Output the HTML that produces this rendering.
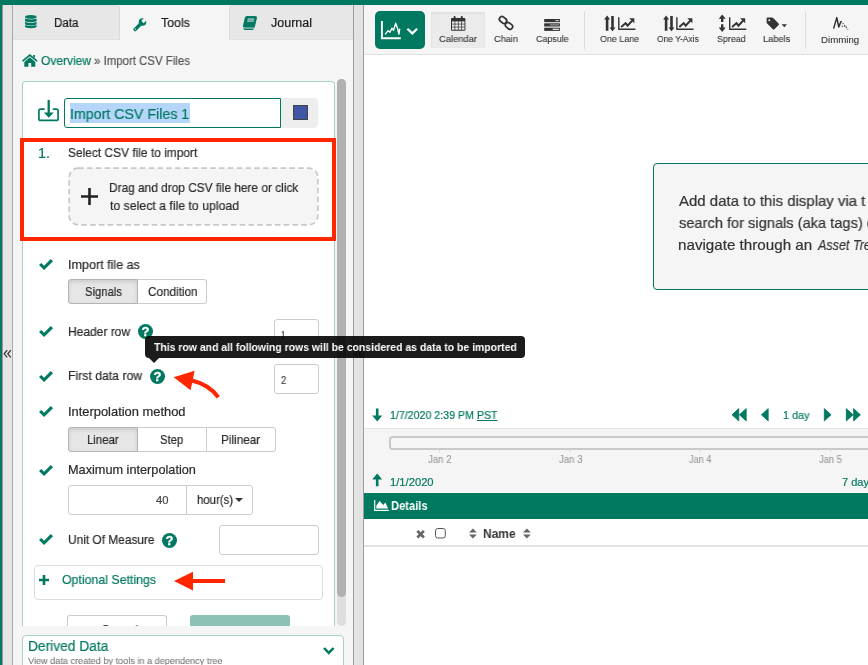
<!DOCTYPE html>
<html lang="en">
<head>
<meta charset="utf-8">
<title>Import CSV Files</title>
<style>
*{box-sizing:border-box;margin:0;padding:0}
html,body{width:868px;height:665px;overflow:hidden;background:#fff}
body{font-family:"Liberation Sans",sans-serif;font-size:13px;color:#333;position:relative}
.abs{position:absolute}
.t{position:absolute;white-space:nowrap;line-height:1;transform-origin:0 50%;will-change:transform;-webkit-text-stroke:0.2px}
.g{color:#007960}
#topbar{left:0;top:0;width:868px;height:5px;background:#007960}
#leftgreen{left:0;top:0;width:2px;height:665px;background:#007960}
#collapse{left:2px;top:5px;width:11px;height:660px;background:#e5e5e5;border-left:1px solid #999;border-right:1px solid #aaa}
#panel{left:13px;top:5px;width:340px;height:660px;background:#f5f5f5}
#divider{left:353px;top:5px;width:11px;height:660px;background:#e3e3e3;border-left:1px solid #9c9c9c;border-right:1px solid #9c9c9c}
.tab{position:absolute;top:5px;height:35px;background:#e7e7e7;border:1px solid #dadada;border-top-color:#e2e2e2;border-bottom-color:#e0e0e0}
#card{left:22px;top:81px;width:313px;height:545px;background:#fff;border:1px solid #a6d3c8;border-bottom:none;border-radius:4px 4px 0 0}
#scroll{left:337px;top:79px;width:9px;height:518px;background:#b1b1b1;border-radius:5px}
#redbox{left:20px;top:138px;width:316px;height:103px;border:4px solid #ff2600}
#drop{left:68px;top:167px;width:251px;height:59px}
.btn{position:absolute;height:25px;border:1px solid #ccc;background:#fff}
.btn.act{background:#e6e6e6;border-color:#b4b4b4;box-shadow:inset 0 2px 4px rgba(0,0,0,.12)}
.inp{position:absolute;border:1px solid #ccc;border-radius:3px;background:#fff}
#tooltip{left:145px;top:335.5px;width:379.5px;height:22px;background:rgba(8,8,8,.92);border-radius:4px}
#tiparrow{left:148.5px;top:357.5px;width:0;height:0;border:5.5px solid transparent;border-top:5px solid rgba(8,8,8,.92);border-bottom:none}
#optional{left:34px;top:565px;width:289px;height:35px;border:1px solid #ddd;border-radius:4px;background:#fff}
#derived{left:22px;top:635px;width:322px;height:40px;border:1px solid #a6d3c8;border-radius:4px;background:#fff}
#toolbar{left:364px;top:5px;width:504px;height:50px;background:#f5f5f5;border-bottom:1px solid #e0e0e0}
#viewbtn{left:375px;top:11px;width:50px;height:38px;background:#007960;border-radius:5px}
#calsel{left:431px;top:12px;width:54px;height:36px;background:#ebebeb;box-shadow:inset 0 1px 3px rgba(0,0,0,.08)}
.sep{position:absolute;top:11px;width:1px;height:38px;background:#dcdcdc}
#info{left:653px;top:162.5px;width:230px;height:127.5px;border:1px solid #007960;border-radius:4px;background:#f5f5f5}
#rangebar{left:364px;top:428px;width:504px;height:65px;background:#f5f5f5;border-top:1px solid #e4e4e4}
#slider{left:389px;top:436px;width:490px;height:14px;border:2px solid #c9c9c9;border-radius:3.5px;background:#f6f6f6}
#details{left:364px;top:493px;width:504px;height:26px;background:#007960}
#thead{left:364px;top:519px;width:504px;height:28px;background:#fff;border-bottom:2px solid #e3e3e3}
svg{position:absolute;overflow:visible;will-change:transform}
</style>
</head>
<body>
<div class="abs" id="panel"></div>
<div class="abs" id="topbar"></div>
<div class="abs" id="leftgreen"></div>
<div class="abs" id="collapse"></div>

<!-- tabs -->
<div class="tab" style="left:13px;width:107px;border-radius:3px 3px 0 0;border-left:none"></div>
<div class="tab" style="left:229px;width:124px;border-radius:3px 3px 0 0;border-right:none"></div>

<!-- breadcrumb -->

<!-- card -->
<div class="abs" id="card"></div>
<div class="abs" style="left:337px;top:79px;width:9px;height:547px;background:#dedede;border-radius:5px"></div>
<div class="abs" id="scroll"></div>

<!-- name row -->
<div class="inp" style="left:64px;top:98px;width:217px;height:30px;border-color:#007960;border-radius:3px 0 0 3px"></div>
<div class="abs" style="left:70px;top:103px;width:120px;height:20px;background:#b5d5fb"></div>
<div class="abs" style="left:281px;top:98px;width:37px;height:30px;background:#eee;border-radius:0 4px 4px 0"></div>
<div class="abs" style="left:293px;top:105px;width:15px;height:15px;background:#4055a5;border:1px solid #444"></div>

<!-- step 1 -->
<svg id="drop" viewBox="0 0 251 59"><rect x="1.2" y="1.2" width="248.6" height="56.6" rx="9" fill="#f5f5f5" stroke="#c8c8c8" stroke-width="1.7" stroke-dasharray="5.6 3.2"/></svg>
<div class="abs" id="redbox"></div>

<!-- import as -->
<div class="btn act" style="left:68px;top:279px;width:70px;border-radius:3px 0 0 3px"></div>
<div class="btn" style="left:137px;top:279px;width:70px;border-radius:0 3px 3px 0;border-left-color:#b4b4b4"></div>

<!-- header row -->
<div class="inp" style="left:274px;top:319px;width:45px;height:30px"></div>

<!-- first data row -->
<div class="inp" style="left:274px;top:364px;width:45px;height:30px"></div>


<!-- interpolation -->
<div class="btn act" style="left:68px;top:427px;width:70px;border-radius:3px 0 0 3px"></div>
<div class="btn" style="left:137px;top:427px;width:70px;border-left-color:#b4b4b4"></div>
<div class="btn" style="left:206px;top:427px;width:70px;border-radius:0 3px 3px 0"></div>

<!-- max interp -->
<div class="inp" style="left:68px;top:485px;width:119px;height:30px;border-radius:3px 0 0 3px"></div>
<div class="inp" style="left:186px;top:485px;width:67px;height:30px;border-radius:0 3px 3px 0"></div>
<div class="abs" style="left:235px;top:498px;width:0;height:0;border:4px solid transparent;border-top:4px solid #333;border-bottom:none"></div>

<!-- UOM -->
<div class="inp" style="left:219px;top:525px;width:100px;height:30px"></div>

<!-- optional -->
<div class="abs" id="optional"></div>

<!-- buttons -->
<div class="abs" style="left:67px;top:615px;width:100px;height:11px;border:1px solid #ccc;border-bottom:none;border-radius:3px 3px 0 0;background:#fff"></div>
<div class="abs" style="left:190px;top:615px;width:100px;height:11px;border-radius:3px 3px 0 0;background:#8cc2b6"></div>


<div class="abs" style="left:23px;top:610px;width:311px;height:16px;overflow:hidden"><div class="t" style="left:78px;top:14.2px;font-size:12.7px;color:#333;transform:scaleX(.94)">Cancel</div><div class="t" style="left:198px;top:14.5px;font-size:12.7px;color:#e8f3f0;transform:scaleX(.94)">Execute</div></div>
<div class="abs" id="derived"></div>
<!-- ICONS LEFT -->
<!-- database -->
<svg style="left:24.8px;top:14.8px" width="11.6" height="13.2" viewBox="0 0 12 13.2" preserveAspectRatio="none">
<ellipse cx="6" cy="1.9" rx="6" ry="1.9" fill="#007960"/>
<path d="M0 2.9 A6 1.7 0 0 0 12 2.9 V5.5 A6 1.7 0 0 1 0 5.5 Z M0 6.2 A6 1.7 0 0 0 12 6.2 V8.8 A6 1.7 0 0 1 0 8.8 Z M0 9.4 A6 1.7 0 0 0 12 9.4 V11.5 A6 1.7 0 0 1 0 11.5 Z" fill="#007960"/>
</svg>
<!-- wrench -->
<svg style="left:132.9px;top:17.6px" width="13.4" height="13.6" viewBox="0 0 13.4 13.6">
<path d="M2.1 11.5 L8.6 5" stroke="#007960" stroke-width="3.3" stroke-linecap="round" fill="none"/>
<circle cx="9.5" cy="4" r="3.8" fill="#007960"/>
<path d="M10.7 5.2 L14.3 1.6 L11.9 -0.8 L8.3 2.8 Z" fill="#f5f5f5"/>
<circle cx="2.4" cy="11.2" r="0.6" fill="#f5f5f5"/>
</svg>
<!-- book -->
<svg style="left:241.5px;top:16px" width="15" height="14" viewBox="0 0 15 14">
<path d="M4.2 0.5 H13.6 Q14.8 0.5 14.5 1.7 L12.3 11.2 Q12.1 12 11.2 12 H3 Q1.8 12 1.8 13 Q1.8 13.5 2.6 13.5 H11.4" fill="none" stroke="#007960" stroke-width="1"/>
<path d="M4.2 0.5 H13.6 Q14.8 0.5 14.5 1.7 L12.3 10.4 Q12.1 11.2 11.2 11.2 H2.2 Q0.6 11.4 0.9 9.9 L2.9 1.6 Q3.2 0.5 4.2 0.5 Z" fill="#007960"/>
<path d="M5.6 3.1 H12.2 M5.2 5.1 H11.8" stroke="#e8e8e8" stroke-width="1" fill="none"/>
</svg>
<!-- home -->
<svg style="left:22.4px;top:54px" width="15.6" height="12.8" viewBox="0 0 15.6 12.8">
<path d="M7.8 0 L15.6 6.5 L14.5 7.8 L7.8 2.2 L1.1 7.8 L0 6.5 Z" fill="#007960"/>
<path d="M11.2 0.9 H13 V4 L11.2 2.5 Z" fill="#007960"/>
<path d="M7.8 3.3 L13.3 7.9 V12.8 H9.2 V9 H6.4 V12.8 H2.3 V7.9 Z" fill="#007960"/>
</svg>
<!-- import -->
<svg style="left:38px;top:99.5px" width="21" height="21.5" viewBox="0 0 21 21.5">
<path d="M6.7 9.1 H2.6 Q0.9 9.1 0.9 10.8 V18.7 Q0.9 20.4 2.6 20.4 H18.4 Q20.1 20.4 20.1 18.7 V10.8 Q20.1 9.1 18.4 9.1 H14.8" fill="none" stroke="#007960" stroke-width="1.7"/>
<path d="M10.7 0.8 V13.5" stroke="#007960" stroke-width="2.3" stroke-linecap="round"/>
<path d="M5.8 12.6 H15.8 L10.8 17.8 Z" fill="#007960"/>
</svg>
<!-- plus (dropzone) -->
<svg style="left:81px;top:188px" width="17" height="17" viewBox="0 0 17 17"><path d="M8.5 0 V17 M0 8.5 H17" stroke="#222" stroke-width="2.6"/></svg>
<!-- checks -->
<svg style="left:39px;top:259px" width="14" height="11" viewBox="0 0 14 11"><path id="chk" d="M0 6.1 L2.2 3.9 L5.1 6.8 L11.8 0 L14 2.2 L5.1 11.1 Z" fill="#007960"/></svg>
<svg style="left:39px;top:326px" width="14" height="11" viewBox="0 0 14 11"><use href="#chk"/></svg>
<svg style="left:39px;top:371px" width="14" height="11" viewBox="0 0 14 11"><use href="#chk"/></svg>
<svg style="left:39px;top:406px" width="14" height="11" viewBox="0 0 14 11"><use href="#chk"/></svg>
<svg style="left:39px;top:465px" width="14" height="11" viewBox="0 0 14 11"><use href="#chk"/></svg>
<svg style="left:39px;top:534px" width="14" height="11" viewBox="0 0 14 11"><use href="#chk"/></svg>
<!-- question marks -->
<svg style="left:138.2px;top:323.5px" width="15" height="15" viewBox="0 0 15 15"><circle cx="7.5" cy="7.5" r="7.5" fill="#007960"/><text x="7.5" y="12.1" text-anchor="middle" font-family="Liberation Sans, sans-serif" font-weight="bold" font-size="13" fill="#fff" stroke="#fff" stroke-width="0.3">?</text></svg>
<svg style="left:150.1px;top:368.9px" width="15" height="15" viewBox="0 0 15 15"><circle cx="7.5" cy="7.5" r="7.5" fill="#007960"/><text x="7.5" y="12.1" text-anchor="middle" font-family="Liberation Sans, sans-serif" font-weight="bold" font-size="13" fill="#fff" stroke="#fff" stroke-width="0.3">?</text></svg>
<svg style="left:162.3px;top:532.5px" width="15" height="15" viewBox="0 0 15 15"><circle cx="7.5" cy="7.5" r="7.5" fill="#007960"/><text x="7.5" y="12.1" text-anchor="middle" font-family="Liberation Sans, sans-serif" font-weight="bold" font-size="13" fill="#fff" stroke="#fff" stroke-width="0.3">?</text></svg>
<!-- optional plus -->
<svg style="left:39.2px;top:574.5px" width="10" height="10" viewBox="0 0 10 10"><path d="M5 0 V10 M0 5 H10" stroke="#007960" stroke-width="2.6"/></svg>
<!-- derived chevron -->
<svg style="left:322.8px;top:647.4px" width="11.6" height="7.8" viewBox="0 0 11.6 7.8"><path d="M1 1 L5.8 5.9 L10.6 1" stroke="#007960" stroke-width="2.5" fill="none"/></svg>
<!-- red arrows -->
<svg style="left:0;top:0" width="868" height="665" viewBox="0 0 868 665">
<path d="M173.7 377.2 L194.6 370.8 L190.6 390.2 Z" fill="#ff2600"/>
<path d="M191 380.3 Q209 384.5 218.3 397.2" stroke="#ff2600" stroke-width="4" fill="none"/>
<path d="M174 581 L193 571.7 V590.5 Z" fill="#ff2600"/>
<path d="M192 581 H225" stroke="#ff2600" stroke-width="4.2"/>
</svg>

<div class="abs" id="divider"></div>

<svg style="left:0;top:0" width="868" height="665" viewBox="0 0 868 665"><path d="M7.2 350.2 L4.2 353.8 L7.2 357.4 M10.8 350.2 L7.8 353.8 L10.8 357.4 M358.2 350.2 L355.2 353.8 L358.2 357.4 M361.8 350.2 L358.8 353.8 L361.8 357.4" stroke="#333" stroke-width="1.25" fill="none"/></svg>
<!-- toolbar -->
<div class="abs" id="toolbar"></div>
<div class="abs" id="viewbtn"></div>
<div class="abs" id="calsel"></div>
<div class="sep" style="left:584px"></div>
<div class="sep" style="left:805px"></div>

<!-- info -->
<div class="abs" id="info"></div>

<!-- date row -->
<div class="abs" id="rangebar"></div>
<div class="abs" id="slider"></div>

<div class="abs" id="details"></div>
<div class="abs" id="thead"></div>

<!-- ICONS RIGHT -->
<svg style="left:0;top:0" width="868" height="665" viewBox="0 0 868 665">
<!-- view button trend icon -->
<path d="M381.9 21 V38.3 H400.8" stroke="#fff" stroke-width="1.9" fill="none"/>
<path d="M385.2 34.4 L388 30.6 L390 32.2 L391.9 28.3 L393.5 30.2 L395.7 23.2 L397.7 29 L398.9 34.2 L399.8 28.6" stroke="#fff" stroke-width="1.35" fill="none" stroke-linejoin="round"/>
<path d="M407.4 28.8 L412.3 33.4 L417.2 28.8" stroke="#fff" stroke-width="2.2" fill="none"/>
<!-- calendar -->
<g fill="#333">
<rect x="451" y="18" width="14.4" height="12.8" rx="1"/>
<rect x="453.6" y="16" width="2" height="4" rx="1"/>
<rect x="460.8" y="16" width="2" height="4" rx="1"/>
</g>
<g fill="#eaeaea">
<rect x="452" y="21.4" width="2.6" height="2.3"/><rect x="455.3" y="21.4" width="2.6" height="2.3"/><rect x="458.6" y="21.4" width="2.6" height="2.3"/><rect x="461.9" y="21.4" width="2.6" height="2.3"/>
<rect x="452" y="24.4" width="2.6" height="2.3"/><rect x="455.3" y="24.4" width="2.6" height="2.3"/><rect x="458.6" y="24.4" width="2.6" height="2.3"/><rect x="461.9" y="24.4" width="2.6" height="2.3"/>
<rect x="452" y="27.4" width="2.6" height="2.3"/><rect x="455.3" y="27.4" width="2.6" height="2.3"/><rect x="458.6" y="27.4" width="2.6" height="2.3"/><rect x="461.9" y="27.4" width="2.6" height="2.3"/>
</g>
<!-- chain -->
<g fill="none" stroke="#333" stroke-width="1.7">
<rect x="-3.9" y="-2.6" width="7.8" height="5.2" rx="2.6" transform="translate(503 20) rotate(38)"/>
<rect x="-3.9" y="-2.6" width="7.8" height="5.2" rx="2.6" transform="translate(509 25.9) rotate(38)"/>
</g>
<!-- capsule -->
<g>
<rect x="544.2" y="19" width="15.7" height="3.2" fill="#333"/><rect x="555.3" y="20" width="3.6" height="1.2" fill="#bbb"/>
<rect x="544.2" y="23.3" width="15.7" height="3.2" fill="#333"/><rect x="549.8" y="24.3" width="9.1" height="1.2" fill="#999"/>
<rect x="544.2" y="27.7" width="15.7" height="3.2" fill="#333"/><rect x="552.6" y="28.7" width="6.3" height="1.2" fill="#eee"/>
</g>
<!-- one lane -->
<g id="updown" fill="#333">
<path d="M607.1 15.6 L610.1 19.5 H608.4 V30.7 H605.8 V19.5 H604.1 Z"/>
<path d="M612.5 31.3 L609.5 27.4 H611.2 V16 H613.8 V27.4 H615.5 Z"/>
</g>
<g id="chart" fill="none" stroke="#333">
<path d="M618.8 17.2 V29.3 H635.4" stroke-width="1.4"/>
<path d="M621.2 27.1 L625.6 23.1 L627.6 25.7 L632.2 20.6" stroke-width="2"/>
<path d="M629.2 18.3 H634.3 V23.2 Z" fill="#333" stroke="none"/>
</g>
<!-- one y-axis -->
<use href="#updown" x="59"/>
<use href="#chart" x="58.1"/>
<!-- spread -->
<path d="M722.2 14.4 L725.7 18.7 H723.4 V22.1 H721 V18.7 H718.7 Z M722.2 31.9 L725.7 27.6 H723.4 V24.2 H721 V27.6 H718.7 Z" fill="#333"/>
<use href="#chart" x="110.9"/>
<!-- tag -->
<path d="M766.6 18.8 Q766.6 17.6 767.8 17.6 H772 Q772.8 17.6 773.4 18.2 L778.6 23.4 Q779.4 24.2 778.6 25 L774.4 29.2 Q773.6 30 772.8 29.2 L767.2 23.6 Q766.6 23 766.6 22.2 Z" fill="#333"/>
<circle cx="769.3" cy="20.3" r="1" fill="#f5f5f5"/>
<path d="M781.6 24.2 H787 L784.3 27.2 Z" fill="#333"/>
<!-- dimming -->
<path d="M833.6 28.6 L836.8 17.6 L838.8 27 L841 21.2" stroke="#333" stroke-width="1.5" fill="none" stroke-linejoin="round"/>
<path d="M841 21.2 L848 29.6" stroke="#555" stroke-width="1.3" stroke-dasharray="1.2 1.4" fill="none"/>
<path d="M841.6 26.4 H847" stroke="#555" stroke-width="1.2" stroke-dasharray="1.2 1.4" fill="none"/>

<!-- date row arrows -->
<g fill="#007960">
<path d="M375.9 408.6 H378.5 V415.6 H382.2 L377.2 421.4 L372.2 415.6 H375.9 Z"/>
<path d="M375.9 486.2 H378.5 V479.4 H382.2 L377.2 473.6 L372.2 479.4 H375.9 Z"/>
<g stroke="#007960" stroke-width="0.8" stroke-linejoin="round"><path d="M738.8 408.6 V421 L732 414.8 Z M746.2 408.6 V421 L739.4 414.8 Z"/>
<path d="M768.2 408.6 V421 L761.4 414.8 Z"/>
<path d="M824.3 408.6 V421 L831.1 414.8 Z"/>
<path d="M846.3 408.6 V421 L853.1 414.8 Z M853.6 408.6 V421 L860.4 414.8 Z"/></g>
</g>
<!-- ticks -->
<path d="M439.5 449.5 V452.5 M570 449.5 V452.5 M700.3 449.5 V452.5 M830.5 449.5 V452.5" stroke="#d8d8d8" stroke-width="1"/>
<!-- details icon -->
<path d="M374.7 500 V510.4 H388.8" stroke="#fff" stroke-width="1.15" fill="none"/>
<path d="M376.3 508.5 V505.8 L379.5 500.9 L383.3 504.9 L385.4 502.5 L388.1 508.5 Z" fill="#fff"/>
<!-- x -->
<path d="M417.3 530.9 L423.9 537.5 M423.9 530.9 L417.3 537.5" stroke="#666" stroke-width="2.7"/>
<!-- checkbox -->
<rect x="435.5" y="528.5" width="9.8" height="9.5" rx="2.2" fill="#fff" stroke="#555" stroke-width="1"/>
<!-- sort icons -->
<g fill="#666">
<path d="M469 532.6 L472.9 528.6 L476.8 532.6 Z M469 534.4 L472.9 538.4 L476.8 534.4 Z"/>
<path d="M523 532.6 L526.9 528.6 L530.8 532.6 Z M523 534.4 L526.9 538.4 L530.8 534.4 Z"/>
</g>
</svg>
<div class="t" style="left:53.58px;top:17px;font-size:12.5px;color:#1a1a1a;transform:scaleX(0.9231);">Data</div>
<div class="t" style="left:160.50px;top:17px;font-size:12.5px;color:#1a1a1a;transform:scaleX(0.9828);">Tools</div>
<div class="t" style="left:270.75px;top:17px;font-size:12.5px;color:#1a1a1a;transform:scaleX(1.0000);">Journal</div>
<div class="t" style="left:41.00px;top:55px;font-size:12.5px;color:#007960;transform:scaleX(0.9615);">Overview</div>
<div class="t" style="left:94.00px;top:55px;font-size:12.5px;color:#555;transform:scaleX(0.9143);">» Import CSV Files</div>
<div class="t" style="left:70.03px;top:107px;font-size:14.7px;color:#007960;transform:scaleX(0.9672);">Import CSV Files 1</div>
<div class="t" style="left:37.97px;top:146px;font-size:14px;color:#007960;transform:scaleX(1.0300);">1.</div>
<div class="t" style="left:67.81px;top:147px;font-size:12.7px;color:#2a2a2a;transform:scaleX(0.9398);">Select CSV file to import</div>
<div class="t" style="left:109.06px;top:182px;font-size:12.7px;color:#2a2a2a;transform:scaleX(0.9353);">Drag and drop CSV file here or click</div>
<div class="t" style="left:110.00px;top:200px;font-size:12.7px;color:#2a2a2a;transform:scaleX(0.9680);">to select a file to upload</div>
<div class="t" style="left:67.76px;top:259px;font-size:12.7px;color:#2a2a2a;transform:scaleX(0.9894);">Import file as</div>
<div class="t" style="left:84.61px;top:286px;font-size:12.7px;color:#2a2a2a;transform:scaleX(0.8875);">Signals</div>
<div class="t" style="left:147.50px;top:286px;font-size:12.7px;color:#2a2a2a;transform:scaleX(0.9245);">Condition</div>
<div class="t" style="left:67.80px;top:326px;font-size:12.7px;color:#2a2a2a;transform:scaleX(0.9462);">Header row</div>
<div class="t" style="left:280.80px;top:330px;font-size:11px;color:#444;transform:scaleX(0.7000);">1</div>
<div class="t" style="left:67.79px;top:370px;font-size:12.7px;color:#2a2a2a;transform:scaleX(0.9638);">First data row</div>
<div class="t" style="left:280.50px;top:375px;font-size:11px;color:#444;transform:scaleX(0.8667);">2</div>
<div class="t" style="left:67.73px;top:406px;font-size:12.7px;color:#2a2a2a;transform:scaleX(1.0154);">Interpolation method</div>
<div class="t" style="left:86.60px;top:434px;font-size:12.7px;color:#2a2a2a;transform:scaleX(0.8971);">Linear</div>
<div class="t" style="left:159.86px;top:434px;font-size:12.7px;color:#2a2a2a;transform:scaleX(0.8900);">Step</div>
<div class="t" style="left:221.07px;top:434px;font-size:12.7px;color:#2a2a2a;transform:scaleX(0.9268);">Pilinear</div>
<div class="t" style="left:67.75px;top:464px;font-size:12.7px;color:#2a2a2a;transform:scaleX(1.0020);">Maximum interpolation</div>
<div class="t" style="left:155.75px;top:495px;font-size:11px;color:#444;transform:scaleX(1.0208);">40</div>
<div class="t" style="left:196.60px;top:494px;font-size:12.7px;color:#2a2a2a;transform:scaleX(0.8974);">hour(s)</div>
<div class="t" style="left:67.81px;top:534px;font-size:12.7px;color:#2a2a2a;transform:scaleX(0.9368);">Unit Of Measure</div>
<div class="t" style="left:62.00px;top:573px;font-size:13px;color:#007960;transform:scaleX(0.9495);">Optional Settings</div>
<div class="t" style="left:27.52px;top:639px;font-size:14px;color:#007960;transform:scaleX(0.9815);">Derived Data</div>
<div class="t" style="left:28.00px;top:656px;font-size:9.5px;color:#777;transform:scaleX(0.9604);-webkit-text-stroke:0.1px;">View data created by tools in a dependency tree</div>
<div class="t" style="left:439.00px;top:34px;font-size:9.6px;color:#333;transform:scaleX(0.9744);-webkit-text-stroke:0.1px;">Calendar</div>
<div class="t" style="left:494.00px;top:34px;font-size:9.6px;color:#333;transform:scaleX(0.9600);-webkit-text-stroke:0.1px;">Chain</div>
<div class="t" style="left:535.50px;top:34px;font-size:9.6px;color:#333;transform:scaleX(0.9286);-webkit-text-stroke:0.1px;">Capsule</div>
<div class="t" style="left:600.00px;top:34px;font-size:9.6px;color:#333;transform:scaleX(0.9286);-webkit-text-stroke:0.1px;">One Lane</div>
<div class="t" style="left:656.50px;top:34px;font-size:9.6px;color:#333;transform:scaleX(0.8802);-webkit-text-stroke:0.1px;">One Y-Axis</div>
<div class="t" style="left:716.50px;top:34px;font-size:9.6px;color:#333;transform:scaleX(0.9274);-webkit-text-stroke:0.1px;">Spread</div>
<div class="t" style="left:763.00px;top:34px;font-size:9.6px;color:#333;transform:scaleX(0.9643);-webkit-text-stroke:0.1px;">Labels</div>
<div class="t" style="left:821.40px;top:35px;font-size:9.6px;color:#333;transform:scaleX(1.0079);-webkit-text-stroke:0.1px;">Dimming</div>
<div class="t" style="left:679.40px;top:193px;font-size:15px;color:#333;transform:scaleX(0.9978);">Add data to this display via t</div>
<div class="t" style="left:679.40px;top:215px;font-size:15px;color:#333;transform:scaleX(0.9750);">search for signals (aka tags) o</div>
<div class="t" style="left:678.39px;top:237px;font-size:15px;color:#333;transform:scaleX(1.0122);">navigate through an</div>
<div class="t" style="left:818.14px;top:237px;font-size:15px;color:#333;transform:scaleX(0.8385);font-style:italic;">Asset Tree</div>
<div class="t" style="left:389.53px;top:410px;font-size:11px;color:#007960;transform:scaleX(0.9659);">1/7/2020 2:39 PM <u>PST</u></div>
<div class="t" style="left:782.52px;top:410px;font-size:11px;color:#007960;transform:scaleX(0.9808);">1 day</div>
<div class="t" style="left:428.00px;top:455px;font-size:10px;color:#999;transform:scaleX(0.9583);-webkit-text-stroke:0.1px;">Jan 2</div>
<div class="t" style="left:558.75px;top:455px;font-size:10px;color:#999;transform:scaleX(0.9583);-webkit-text-stroke:0.1px;">Jan 3</div>
<div class="t" style="left:689.00px;top:455px;font-size:10px;color:#999;transform:scaleX(0.9100);-webkit-text-stroke:0.1px;">Jan 4</div>
<div class="t" style="left:819.00px;top:455px;font-size:10px;color:#999;transform:scaleX(0.9300);-webkit-text-stroke:0.1px;">Jan 5</div>
<div class="t" style="left:389.98px;top:477px;font-size:11px;color:#007960;transform:scaleX(1.0179);">1/1/2020</div>
<div class="t" style="left:841.50px;top:477px;font-size:11px;color:#007960;transform:scaleX(1.0037);">7 days</div>
<div class="t" style="left:391.14px;top:499px;font-size:13px;color:#fff;transform:scaleX(0.8571);font-weight:bold;-webkit-text-stroke:0;">Details</div>
<div class="t" style="left:482.83px;top:527px;font-size:13px;color:#333;transform:scaleX(0.9191);font-weight:bold;-webkit-text-stroke:0;">Name</div>
<!-- tooltip -->
<div class="abs" id="tooltip"></div>
<div class="abs" id="tiparrow"></div>
<div class="t" style="left:153.75px;top:342px;font-size:11.5px;color:#fff;transform:scaleX(0.9085);font-weight:bold;-webkit-text-stroke:0;">This row and all following rows will be considered as data to be imported</div>
</body>
</html>
